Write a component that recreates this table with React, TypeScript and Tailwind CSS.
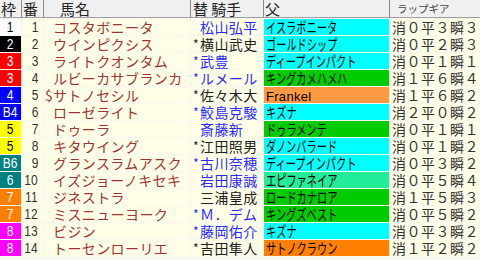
const CYAN = "bg-[#00ffff]";
const GREEN = "bg-[#00cc00]";

type Row = {
  waku: string;
  wakuCls: string;
  no: number;
  mark?: string;
  name: string;
  star: boolean;
  jockey: string;
  blue: boolean;
  sire: string;
  sireCls: string;
  lap: string;
};

const ROWS: Row[] = [
  { waku: "1", wakuCls: "bg-white text-black", no: 1, name: "コスタボニータ", star: false, jockey: "松山弘平", blue: true, sire: "イスラボニータ", sireCls: CYAN, lap: "消０平３瞬３" },
  { waku: "2", wakuCls: "bg-black text-white", no: 2, name: "ウインピクシス", star: true, jockey: "横山武史", blue: false, sire: "ゴールドシップ", sireCls: CYAN, lap: "消０平２瞬３" },
  { waku: "3", wakuCls: "bg-[#ff0000] text-white", no: 3, name: "ライトクオンタム", star: true, jockey: "武豊", blue: true, sire: "ディープインパクト", sireCls: CYAN, lap: "消０平１瞬１" },
  { waku: "3", wakuCls: "bg-[#ff0000] text-white", no: 4, name: "ルビーカサブランカ", star: true, jockey: "ルメール", blue: true, sire: "キングカメハメハ", sireCls: GREEN, lap: "消１平６瞬４" },
  { waku: "4", wakuCls: "bg-[#0000ff] text-white", no: 5, mark: "$", name: "サトノセシル", star: true, jockey: "佐々木大", blue: false, sire: "Frankel", sireCls: "bg-[#ff9944]", lap: "消１平６瞬２" },
  { waku: "B4", wakuCls: "bg-[#0000ff] text-white", no: 6, name: "ローゼライト", star: true, jockey: "鮫島克駿", blue: true, sire: "キズナ", sireCls: CYAN, lap: "消２平０瞬２" },
  { waku: "5", wakuCls: "bg-[#ffff00] text-black", no: 7, name: "ドゥーラ", star: false, jockey: "斎藤新", blue: true, sire: "ドゥラメンテ", sireCls: GREEN, lap: "消０平１瞬１" },
  { waku: "5", wakuCls: "bg-[#ffff00] text-black", no: 8, name: "キタウイング", star: true, jockey: "江田照男", blue: false, sire: "ダノンバラード", sireCls: CYAN, lap: "消０平１瞬２" },
  { waku: "B6", wakuCls: "bg-[#008080] text-white", no: 9, name: "グランスラムアスク", star: true, jockey: "古川奈穂", blue: true, sire: "ディープインパクト", sireCls: CYAN, lap: "消０平３瞬２" },
  { waku: "6", wakuCls: "bg-[#008080] text-white", no: 10, name: "イズジョーノキセキ", star: false, jockey: "岩田康誠", blue: true, sire: "エピファネイア", sireCls: "bg-[#22ee99]", lap: "消０平５瞬４" },
  { waku: "7", wakuCls: "bg-[#ff8000] text-white", no: 11, name: "ジネストラ", star: false, jockey: "三浦皇成", blue: false, sire: "ロードカナロア", sireCls: GREEN, lap: "消１平５瞬３" },
  { waku: "7", wakuCls: "bg-[#ff8000] text-white", no: 12, name: "ミスニューヨーク", star: true, jockey: "Ｍ．デム", blue: true, sire: "キングズベスト", sireCls: GREEN, lap: "消０平５瞬２" },
  { waku: "8", wakuCls: "bg-[#ff00ff] text-white", no: 13, name: "ビジン", star: true, jockey: "藤岡佑介", blue: true, sire: "キズナ", sireCls: CYAN, lap: "消０平３瞬２" },
  { waku: "8", wakuCls: "bg-[#ff00ff] text-white", no: 14, name: "トーセンローリエ", star: true, jockey: "吉田隼人", blue: false, sire: "サトノクラウン", sireCls: "bg-[#ff7f00]", lap: "消１平２瞬２" },
];

const JP = "font-['Noto_Sans_CJK_JP',sans-serif]";
const NUM = "font-['Liberation_Sans',sans-serif]";

function Header() {
  return (
    <div className={`flex h-[18px] border-b border-[#a0a0a0] bg-[#f0f0f0] text-[15px] leading-[17px] text-[#222] ${JP}`}>
      <div className="w-[22px] shrink-0 border-r border-[#8a8a8a] pl-[1px]">枠</div>
      <div className="w-[22px] shrink-0 border-r border-[#8a8a8a] pl-[1px]">番</div>
      <div className="w-[147px] shrink-0 border-r border-[#8a8a8a] pl-[16px]">馬名</div>
      <div className="w-[73px] shrink-0 whitespace-pre border-r border-[#8a8a8a] pl-[2px]">替 騎手</div>
      <div className="w-[126px] shrink-0 border-r border-[#8a8a8a] pl-[1px]">父</div>
      <div className="flex-1 pl-[7px] text-[10.5px] leading-[17px] text-[#444]">ラップギア</div>
    </div>
  );
}

function RaceRow({ r }: { r: Row }) {
  const latin = /^[A-Za-z]/.test(r.sire);
  return (
    <div className="flex h-[16px] gap-x-px leading-[16px]">
      <div className={`flex w-[21px] shrink-0 items-center justify-center ${r.wakuCls} ${NUM} text-[15px]`}>
        <span className="inline-block scale-x-[0.8]">{r.waku}</span>
      </div>
      <div className={`flex w-[21px] shrink-0 items-center justify-end bg-[#ffffe8] pr-[5px] text-[15px] text-[#333] ${NUM}`}>
        <span className="inline-block origin-right scale-x-[0.8]">{r.no}</span>
      </div>
      <div className={`flex w-[146px] shrink-0 bg-[#ffffe8] pl-[1px] text-[14px] tracking-[0.4px] whitespace-nowrap text-[#a03333] ${JP}`}>
        <span className="w-[8px] shrink-0 text-[14px] tracking-normal">{r.mark ?? ""}</span>
        <span>{r.name}</span>
      </div>
      <div className={`flex w-[72px] shrink-0 overflow-hidden bg-[#ffffe8] pl-[2px] text-[14px] tracking-[0.4px] whitespace-nowrap ${JP} ${r.blue ? "text-[#2a2aff]" : "text-[#222]"}`}>
        <span className="w-[7px] shrink-0 text-[12px] tracking-normal">{r.star ? "*" : ""}</span>
        <span>{r.jockey}</span>
      </div>
      <div className={`w-[125px] shrink-0 overflow-hidden pl-[2px] whitespace-nowrap text-black ${r.sireCls}`}>
        {latin ? (
          <span className={`text-[13px] tracking-[0.3px] ${NUM}`}>{r.sire}</span>
        ) : (
          <span className={`inline-block origin-left scale-x-[0.68] text-[15px] ${JP}`}>{r.sire}</span>
        )}
      </div>
      <div className={`flex-1 overflow-hidden bg-[#ffffe8] pl-[2px] text-[14px] tracking-[0.5px] whitespace-nowrap text-[#333] ${JP}`}>
        {r.lap}
      </div>
    </div>
  );
}

export default function App() {
  return (
    <div className="h-[260px] w-[480px] overflow-hidden bg-[#f7f7ee]">
      <Header />
      <div className="mt-px flex flex-col gap-y-px">
        {ROWS.map((r) => (
          <RaceRow key={r.no} r={r} />
        ))}
      </div>
    </div>
  );
}
